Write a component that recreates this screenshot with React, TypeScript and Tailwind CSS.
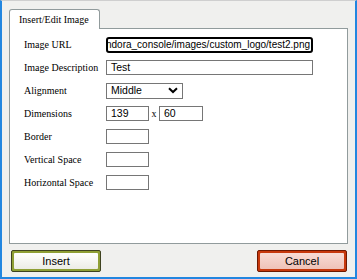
import React from "react";

function Box({ w, children }: { w: string; children?: React.ReactNode }) {
  return (
    <div
      className={`${w} h-[15px] border border-[#767676] bg-white flex items-center pl-[4px] text-[10.5px] text-black leading-none overflow-hidden whitespace-nowrap font-['Liberation_Sans',Arial,sans-serif]`}
    >
      {children}
    </div>
  );
}

function Row({ label, children }: { label: string; children: React.ReactNode }) {
  return (
    <div className="h-[23px] flex items-center">
      <div className="w-[82px] text-[10px] text-black leading-none font-['Liberation_Serif','Times_New_Roman',serif]">
        {label}
      </div>
      {children}
    </div>
  );
}

export default function App() {
  return (
    <div className="w-[357px] h-[279px] bg-[#f0f0ee] border-t border-t-[#cfcfcf] border-l-2 border-r-2 border-b-2 border-l-[#2286e0] border-r-[#2286e0] border-b-[#2286e0] pl-[7px] pt-[8px] flex flex-col">
      <div className="relative z-10 w-[91px] h-[20px] -mb-px bg-white border-t border-l border-r border-[#919b9c] rounded-t-[3px] pl-[9px] flex items-center text-[10px] text-black leading-none font-['Liberation_Serif','Times_New_Roman',serif]">
        Insert/Edit Image
      </div>
      <div className="w-[339px] h-[216px] bg-white border border-[#919b9c] pl-[14px] pt-[4px] flex flex-col">
        <Row label="Image URL">
          <div className="w-[207px] h-[16px] border-2 border-black rounded-[3px] bg-white flex items-center justify-end pr-[1px] text-[10px] text-black leading-none overflow-hidden whitespace-nowrap font-['Liberation_Sans',Arial,sans-serif]">
            <span className="shrink-0">/pandora_console/images/custom_logo/test2.png</span>
          </div>
        </Row>
        <Row label="Image Description">
          <Box w="w-[207px]">Test</Box>
        </Row>
        <Row label="Alignment">
          <div className="w-[77px] h-[16px] border border-[#767676] bg-white flex items-center justify-between pl-[4px] pr-[4px] text-[10.5px] text-black leading-none font-['Liberation_Sans',Arial,sans-serif]">
            <span>Middle</span>
            <svg width="10" height="7" viewBox="0 0 10 7">
              <path d="M1 1.2 L5 5 L9 1.2" fill="none" stroke="#000" strokeWidth="2" />
            </svg>
          </div>
        </Row>
        <Row label="Dimensions">
          <Box w="w-[43px]">139</Box>
          <span className="w-[10px] text-center text-[10px] leading-none text-black font-['Liberation_Serif','Times_New_Roman',serif]">
            x
          </span>
          <Box w="w-[44px]">60</Box>
        </Row>
        <Row label="Border">
          <Box w="w-[43px]" />
        </Row>
        <Row label="Vertical Space">
          <Box w="w-[43px]" />
        </Row>
        <Row label="Horizontal Space">
          <Box w="w-[43px]" />
        </Row>
      </div>
      <div className="mt-[6px] w-[339px] flex justify-between pl-[2px] pr-[1px]">
        <div className="w-[90px] h-[22px] border border-[#3f4220] rounded-[2px] bg-[#8f9f35] p-[2px]">
          <div className="w-full h-full rounded-[1px] bg-gradient-to-b from-[#ffffff] to-[#ecece6] flex items-center justify-center text-[11px] text-black leading-none font-['Liberation_Sans',Arial,sans-serif]">
            Insert
          </div>
        </div>
        <div className="w-[90px] h-[22px] border border-[#6e1800] rounded-[2px] bg-[#c7380c] p-[2px]">
          <div className="w-full h-full rounded-[1px] bg-gradient-to-b from-[#f8dcd5] to-[#efc2b8] flex items-center justify-center text-[11px] text-black leading-none font-['Liberation_Sans',Arial,sans-serif]">
            Cancel
          </div>
        </div>
      </div>
    </div>
  );
}
